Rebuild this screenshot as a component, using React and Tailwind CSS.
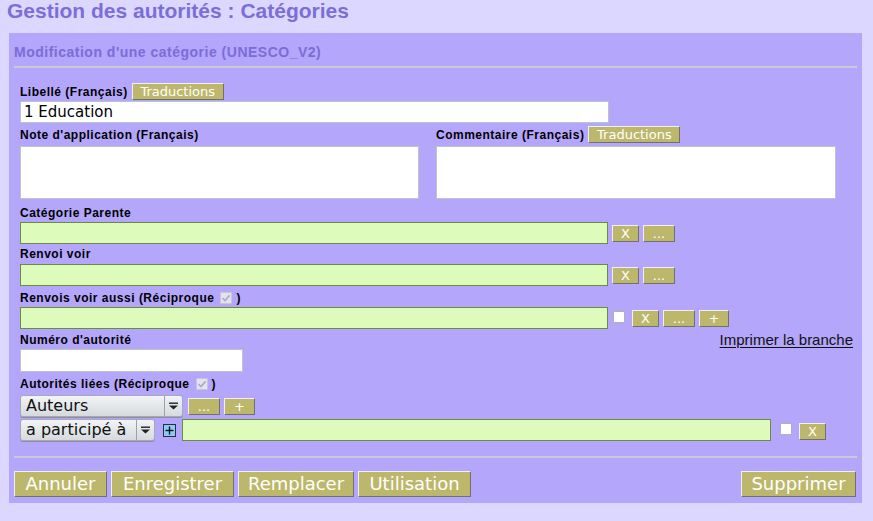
const sans = { fontFamily: '"DejaVu Sans", sans-serif' };

const btn =
  "bg-[#bdb76b] text-white border border-t-[#f0f0f0] border-l-[#f0f0f0] border-r-[#707070] border-b-[#707070] flex items-center justify-center leading-none";

function SmallButton({ children, className = "" }) {
  return (
    <button
      className={`${btn} h-[17px] text-[13px] ${className}`}
      style={sans}
    >
      {children}
    </button>
  );
}

function BigButton({ children, className = "" }) {
  return (
    <button
      className={`${btn} h-[26px] text-[18px] px-[9px] ${className}`}
      style={sans}
    >
      {children}
    </button>
  );
}

function Label({ children, className = "" }) {
  return (
    <div className={`h-[14px] text-[12px] font-bold tracking-[0.5px] leading-[14px] text-black ${className}`}>
      {children}
    </div>
  );
}

function DisabledCheck() {
  return (
    <span className="inline-flex items-center justify-center align-[-1px] w-[12px] h-[12px] ml-[6px] mr-[4px] bg-[#e4e2f0] border border-[#c8c6d6] rounded-[1px]">
      <svg width="10" height="10" viewBox="0 0 10 10">
        <path d="M1.5 5.2 L4 7.6 L8.6 2.4" stroke="#a8aeb8" strokeWidth="1.6" fill="none" />
      </svg>
    </span>
  );
}

function Checkbox({ className = "" }) {
  return (
    <span className={`block w-[12px] h-[12px] bg-white border border-[#aab2ba] rounded-[1px] ${className}`} />
  );
}

function GreenInput({ className = "w-[588px]" }) {
  return <div className={`h-[22px] bg-[#ddfcbb] border border-[#6b8c3e] ${className}`} />;
}

function Select({ value, width, textWidth }) {
  return (
    <div
      className={`${width} h-[22px] flex border border-[#a6a8b4] rounded-[3px] bg-gradient-to-b from-[#f2f4f5] to-[#d6dadd] shadow-[0_1px_0_#8e8aa8]`}
      style={sans}
    >
      <div className={`${textWidth} pl-[5px] text-[16px] leading-[20px] text-[#111] border-r border-[#9ea2a8]`}>
        {value}
      </div>
      <div className="flex-1 flex items-center justify-center">
        <svg width="9" height="8" viewBox="0 0 9 8">
          <rect x="0" y="0.5" width="9" height="1.4" fill="#222" />
          <path d="M0 3.5 L9 3.5 L4.5 7.5 Z" fill="#222" />
        </svg>
      </div>
    </div>
  );
}

export default function App() {
  return (
    <div
      className="w-[873px] h-[521px] bg-[#dcd7fe] overflow-hidden"
      style={{ fontFamily: '"Liberation Sans", Arial, sans-serif' }}
    >
      <div className="h-[33px] pl-[7px] text-[21px] font-bold leading-[22px] text-[#7b6ed9]">
        Gestion des autorités : Catégories
      </div>

      <div className="ml-[9px] w-[853px] bg-[#b3a6fb] px-[5px] pt-[11px] pb-[6px]">
        <div className="text-[14px] font-bold tracking-[0.5px] leading-[16px] text-[#7b6cd8]">
          Modification d'une catégorie (UNESCO_V2)
        </div>
        <div className="mt-[6px] h-[2px] bg-[#cdc9d6]" />

        <div className="pl-[6px]">
          <div className="mt-[15px] h-[17px] flex items-center">
            <Label>Libellé (Français)</Label>
            <SmallButton className="ml-[4px] w-[92px]">Traductions</SmallButton>
          </div>
          <div
            className="mt-[1px] w-[589px] h-[22px] bg-white border border-[#b8c6c8] pl-[3px] text-[15px] leading-[20px] text-black"
            style={sans}
          >
            1 Education
          </div>

          <div className="mt-[3px] flex">
            <div className="w-[416px]">
              <div className="h-[17px] flex items-center">
                <Label>Note d'application (Français)</Label>
              </div>
              <div className="mt-[3px] w-[399px] h-[53px] bg-white border border-[#bcc6c8]" />
            </div>
            <div className="flex-1">
              <div className="h-[17px] flex items-center">
                <Label>Commentaire (Français)</Label>
                <SmallButton className="ml-[4px] w-[92px]">Traductions</SmallButton>
              </div>
              <div className="mt-[3px] w-[400px] h-[53px] bg-white border border-[#bcc6c8]" />
            </div>
          </div>

          <Label className="mt-[7px]">Catégorie Parente</Label>
          <div className="mt-[2px] flex items-center">
            <GreenInput />
            <SmallButton className="ml-[4px] w-[27px]">X</SmallButton>
            <SmallButton className="ml-[4px] w-[32px]">...</SmallButton>
          </div>

          <Label className="mt-[3px]">Renvoi voir</Label>
          <div className="mt-[3px] flex items-center">
            <GreenInput />
            <SmallButton className="ml-[4px] w-[27px]">X</SmallButton>
            <SmallButton className="ml-[4px] w-[32px]">...</SmallButton>
          </div>

          <Label className="mt-[5px]">
            Renvois voir aussi (Réciproque
            <DisabledCheck />)
          </Label>
          <div className="mt-[2px] flex items-center">
            <GreenInput />
            <Checkbox className="ml-[5px] mt-[-2px]" />
            <SmallButton className="ml-[7px] w-[27px]">X</SmallButton>
            <SmallButton className="ml-[4px] w-[32px]">...</SmallButton>
            <SmallButton className="ml-[4px] w-[30px]">+</SmallButton>
          </div>

          <div className="mt-[4px] h-[14px] flex items-center justify-between pr-[4px]">
            <Label>Numéro d'autorité</Label>
            <a className="text-[15px] leading-[16px] text-[#111] underline underline-offset-[2px]">
              Imprimer la branche
            </a>
          </div>
          <div className="mt-[2px] w-[223px] h-[23px] bg-white border border-[#bcc6c8]" />

          <Label className="mt-[5px]">
            Autorités liées (Réciproque
            <DisabledCheck />)
          </Label>
          <div className="mt-[4px] flex items-center">
            <Select value="Auteurs" width="w-[163px]" textWidth="w-[144px]" />
            <SmallButton className="ml-[5px] w-[32px]">...</SmallButton>
            <SmallButton className="ml-[4px] w-[31px]">+</SmallButton>
          </div>
          <div className="mt-[2px] flex items-center">
            <Select value="a participé à" width="w-[135px]" textWidth="w-[116px]" />
            <span className="ml-[8px] w-[13px] h-[13px] bg-[#8ccaf6] border border-[#2a2f3a] flex items-center justify-center">
              <svg width="9" height="9" viewBox="0 0 9 9">
                <rect x="0.5" y="3.8" width="8" height="1.4" fill="#111" />
                <rect x="3.8" y="0.5" width="1.4" height="8" fill="#111" />
              </svg>
            </span>
            <GreenInput className="ml-[6px] w-[589px]" />
            <Checkbox className="ml-[9px] mt-[-2px]" />
            <SmallButton className="ml-[7px] w-[27px] mt-[2px]">X</SmallButton>
          </div>
        </div>

        <div className="mt-[15px] h-[2px] bg-[#cdc9d6]" />

        <div className="mt-[13px] flex items-center">
          <BigButton className="w-[93px]">Annuler</BigButton>
          <BigButton className="ml-[4px] w-[123px]">Enregistrer</BigButton>
          <BigButton className="ml-[4px] w-[116px]">Remplacer</BigButton>
          <BigButton className="ml-[4px] w-[113px]">Utilisation</BigButton>
          <BigButton className="ml-auto mr-[1px] w-[115px]">Supprimer</BigButton>
        </div>
      </div>
    </div>
  );
}
